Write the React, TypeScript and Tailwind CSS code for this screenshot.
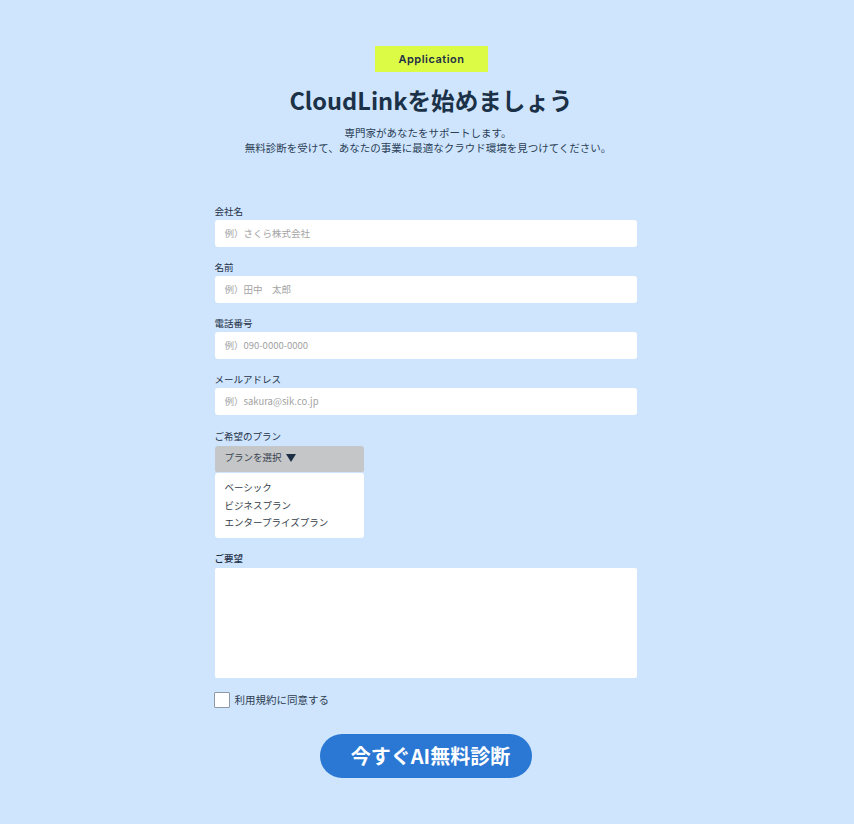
const jp = "font-['Noto_Sans_CJK_JP','Noto_Sans',sans-serif]"

const fields = [
  { label: "会社名", placeholder: "例）さくら株式会社" },
  { label: "名前", placeholder: "例）田中　太郎" },
  { label: "電話番号", placeholder: "例）090-0000-0000" },
  { label: "メールアドレス", placeholder: "例）sakura@sik.co.jp" },
]

const plans = ["ベーシック", "ビジネスプラン", "エンタープライズプラン"]

export default function App() {
  return (
    <div className={`${jp} min-h-[824px] bg-[#cfe5fe] pt-[46px] flex flex-col items-center text-[#1e2f45]`}>
      {/* 見出し */}
      <span className="w-[113px] h-[26px] ml-[9px] bg-[#dcfb45] flex items-center justify-center text-[11px] font-semibold tracking-[0.5px] font-['Inter',sans-serif]">
        Application
      </span>
      <h1 className="mt-[11px] ml-[8px] text-[23.6px] leading-[34px] font-bold text-[#1b3148]">
        CloudLinkを始めましょう
      </h1>
      <p className="mt-[8px] ml-[2px] text-[10.5px] leading-[15px] text-center text-[#2b3f56]">
        専門家があなたをサポートします。
        <br />
        無料診断を受けて、あなたの事業に最適なクラウド環境を見つけてください。
      </p>

      {/* フォーム */}
      <form className="mt-[50px] w-[422px] mr-[3px] flex flex-col">
        {fields.map((f) => (
          <div key={f.label} className="flex flex-col mb-[14px]">
            <label className="text-[9.5px] leading-[12px] h-[14px] mb-[1px]">{f.label}</label>
            <input
              placeholder={f.placeholder}
              className="h-[27px] bg-white rounded-[3px] px-[10px] pb-[1px] text-[9.5px] outline-none placeholder:text-[#a3a3a3]"
            />
          </div>
        ))}

        <label className="text-[9.5px] leading-[14px] h-[14px] mb-[3px]">ご希望のプラン</label>
        <div className="w-[149px] flex flex-col">
          <div className="h-[26px] bg-[#c4c6c8] rounded-t-[3px] rounded-b-[2px] px-[10px] pb-[3px] flex items-center gap-[4px] text-[9.5px] text-[#39434f]">
            プランを選択
            <svg width="10" height="8" viewBox="0 0 10 8" aria-hidden="true">
              <path d="M0 0h10L5 8z" fill="#1e2f45" />
            </svg>
          </div>
          <ul className="mt-[1px] h-[65px] bg-white rounded-[3px] px-[10px] pt-[6px] text-[9.5px] leading-[17.5px] text-[#333c48]">
            {plans.map((p) => (
              <li key={p}>{p}</li>
            ))}
          </ul>
        </div>

        <label className="mt-[13px] text-[9.5px] leading-[14px] h-[14px] mb-[3px] font-medium">ご要望</label>
        <textarea className="h-[110px] bg-white rounded-[2px] resize-none outline-none" />

        <label className="mt-[14px] -ml-[1px] flex items-center gap-[5px] text-[10.5px] text-[#2d3c4f]">
          <span className="w-[16px] h-[16px] bg-white border border-[#8f98a6] rounded-[1px]" />
          利用規約に同意する
        </label>

        <button
          type="button"
          className="mt-[26px] self-center w-[212px] h-[44px] pl-[10px] rounded-full bg-[#2a78d4] text-white text-[20px] font-bold"
        >
          今すぐAI無料診断
        </button>
      </form>
    </div>
  )
}
